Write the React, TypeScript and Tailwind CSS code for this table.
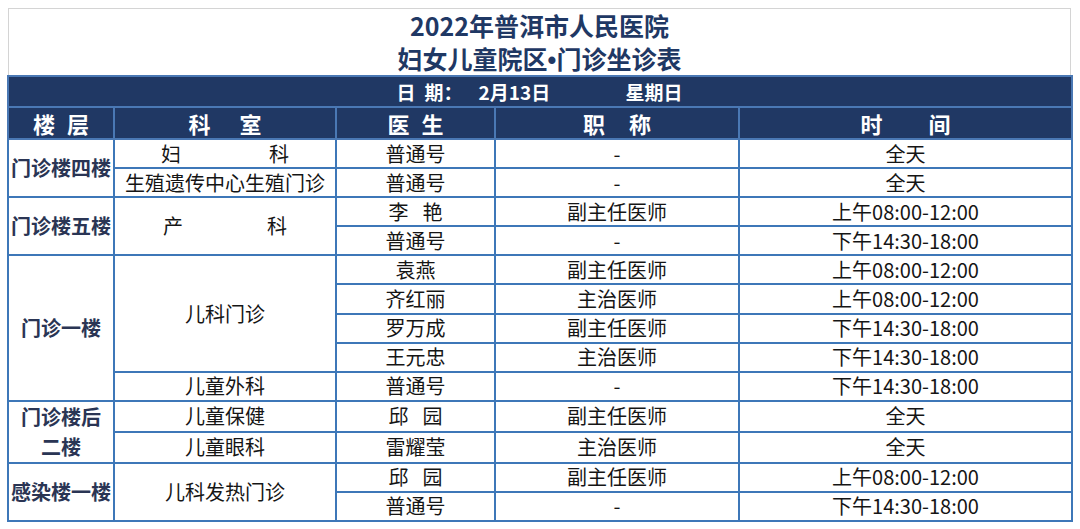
const navy = "bg-[#203864]";

type Row = {
  floor?: { text: string[]; span: number };
  dept?: { text: React.ReactNode; span: number };
  doctor: React.ReactNode;
  title: string;
  time: string;
};

const Spaced = ({ a, b, gap }: { a: string; b: string; gap: string }) => (
  <span className={`inline-flex justify-center ${gap}`}>
    <span>{a}</span>
    <span>{b}</span>
  </span>
);

const rows: Row[] = [
  {
    floor: { text: ["门诊楼四楼"], span: 2 },
    dept: { text: <Spaced a="妇" b="科" gap="gap-[88px]" />, span: 1 },
    doctor: "普通号",
    title: "-",
    time: "全天",
  },
  {
    dept: { text: "生殖遗传中心生殖门诊", span: 1 },
    doctor: "普通号",
    title: "-",
    time: "全天",
  },
  {
    floor: { text: ["门诊楼五楼"], span: 2 },
    dept: { text: <Spaced a="产" b="科" gap="gap-[84px]" />, span: 2 },
    doctor: <Spaced a="李" b="艳" gap="gap-[14px]" />,
    title: "副主任医师",
    time: "上午08:00-12:00",
  },
  { doctor: "普通号", title: "-", time: "下午14:30-18:00" },
  {
    floor: { text: ["门诊一楼"], span: 5 },
    dept: { text: "儿科门诊", span: 4 },
    doctor: "袁燕",
    title: "副主任医师",
    time: "上午08:00-12:00",
  },
  { doctor: "齐红丽", title: "主治医师", time: "上午08:00-12:00" },
  { doctor: "罗万成", title: "副主任医师", time: "下午14:30-18:00" },
  { doctor: "王元忠", title: "主治医师", time: "下午14:30-18:00" },
  {
    dept: { text: "儿童外科", span: 1 },
    doctor: "普通号",
    title: "-",
    time: "下午14:30-18:00",
  },
  {
    floor: { text: ["门诊楼后", "二楼"], span: 2 },
    dept: { text: "儿童保健", span: 1 },
    doctor: <Spaced a="邱" b="园" gap="gap-[14px]" />,
    title: "副主任医师",
    time: "全天",
  },
  {
    dept: { text: "儿童眼科", span: 1 },
    doctor: "雷耀莹",
    title: "主治医师",
    time: "全天",
  },
  {
    floor: { text: ["感染楼一楼"], span: 2 },
    dept: { text: "儿科发热门诊", span: 2 },
    doctor: <Spaced a="邱" b="园" gap="gap-[14px]" />,
    title: "副主任医师",
    time: "上午08:00-12:00",
  },
  { doctor: "普通号", title: "-", time: "下午14:30-18:00" },
];

const cell = "border-2 border-[#3d77b8] text-center align-middle p-0";
const head = `${cell} ${navy} border-[#4a78b4] text-white font-bold text-[22px] leading-[28px]`;

export default function App() {
  return (
    <div className="w-[1080px] h-[529px] bg-white pt-2 pl-2 font-['Noto_Sans_CJK_SC','Noto_Sans',sans-serif] overflow-hidden">
      <div className="w-[1063px] h-[67px] border border-b-0 border-[#d4d4d4] flex flex-col items-center justify-center text-[#1f3864] font-bold text-[25px] leading-[33px]">
        <div className="mt-[1px]">2022年普洱市人民医院</div>
        <div>
          妇女儿童院区<span className="font-['Liberation_Sans',sans-serif]">•</span>门诊坐诊表
        </div>
      </div>
      <table className="w-[1064px] -ml-[1px] border-collapse table-fixed">
        <colgroup>
          <col className="w-[106px]" />
          <col className="w-[222px]" />
          <col className="w-[159px]" />
          <col className="w-[244px]" />
          <col className="w-[333px]" />
        </colgroup>
        <thead>
          <tr className="h-[31px]">
            <th colSpan={5} className={`${cell} ${navy} border-[#4a78b4] text-white font-bold text-[19px] leading-[26px]`}>
              <div className="flex justify-center items-center pl-[2px]">
                <span className="w-[82px] text-left">
                  日<span className="ml-[9px]">期</span>：
                </span>
                <span className="w-[147px] text-left">2月13日</span>
                <span className="w-[60px] text-left">星期日</span>
              </div>
            </th>
          </tr>
          <tr className="h-[32px]">
            <th className={head}>
              <Spaced a="楼" b="层" gap="gap-[12px]" />
            </th>
            <th className={head}>
              <Spaced a="科" b="室" gap="gap-[29px]" />
            </th>
            <th className={head}>
              <Spaced a="医" b="生" gap="gap-[12px]" />
            </th>
            <th className={head}>
              <Spaced a="职" b="称" gap="gap-[24px]" />
            </th>
            <th className={head}>
              <Spaced a="时" b="间" gap="gap-[46px]" />
            </th>
          </tr>
        </thead>
        <tbody className="text-[20px] text-[#151515] leading-[26px]">
          {rows.map((r, i) => (
            <tr key={i} className="h-[29.1px]">
              {r.floor && (
                <td rowSpan={r.floor.span} className={`${cell} font-bold text-[#2a3554] text-[20px]`}>
                  {r.floor.text.map((t) => (
                    <div key={t} className="leading-[30px]">{t}</div>
                  ))}
                </td>
              )}
              {r.dept && (
                <td rowSpan={r.dept.span} className={`${cell} whitespace-nowrap`}>
                  {r.dept.text}
                </td>
              )}
              <td className={cell}>{r.doctor}</td>
              <td className={cell}>{r.title}</td>
              <td className={cell}>{r.time}</td>
            </tr>
          ))}
        </tbody>
      </table>
    </div>
  );
}
